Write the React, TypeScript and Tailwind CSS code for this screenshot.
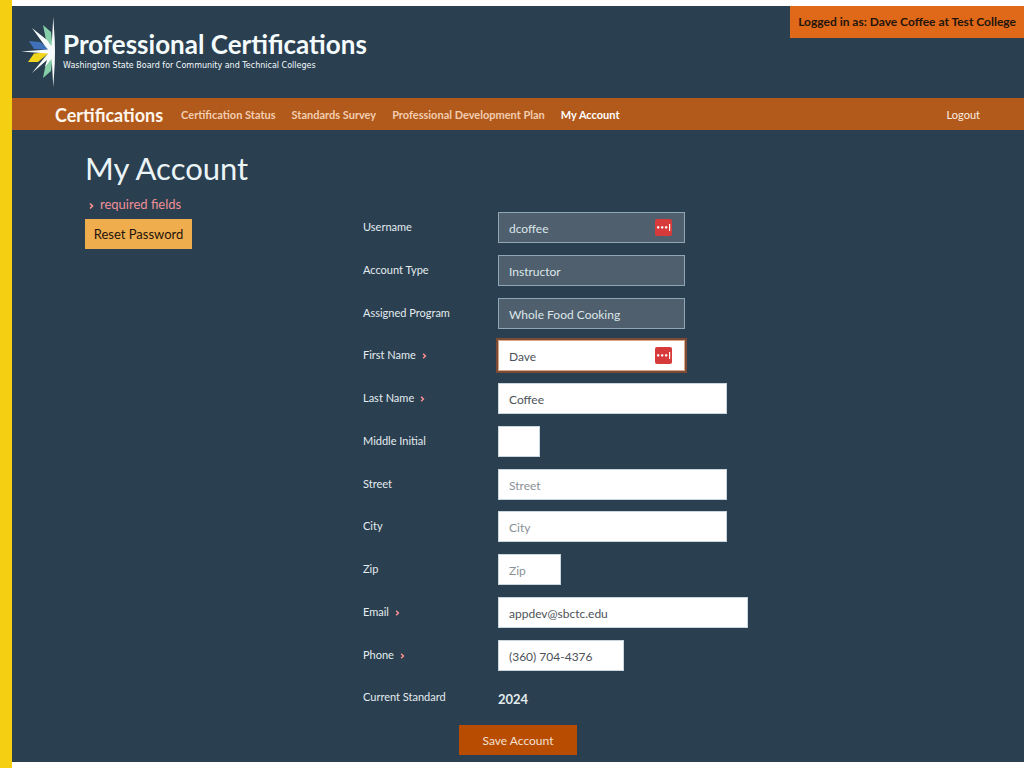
import { useState } from "react";
import type { ChangeEvent } from "react";
import clsx from "clsx";

interface Field {
  id: string;
  label: string;
  value: string;
  width: string;
  placeholder?: string;
  required?: boolean;
  readOnly?: boolean;
  focused?: boolean;
  hasKeyIcon?: boolean;
}

const fields: Field[] = [
  { id: "username", label: "Username", value: "dcoffee", width: "w-[187px]", readOnly: true, hasKeyIcon: true },
  { id: "accountType", label: "Account Type", value: "Instructor", width: "w-[187px]", readOnly: true },
  { id: "program", label: "Assigned Program", value: "Whole Food Cooking", width: "w-[187px]", readOnly: true },
  { id: "firstName", label: "First Name", value: "Dave", width: "w-[187px]", required: true, focused: true, hasKeyIcon: true },
  { id: "lastName", label: "Last Name", value: "Coffee", width: "w-[229px]", required: true },
  { id: "middleInitial", label: "Middle Initial", value: "", width: "w-[42px]" },
  { id: "street", label: "Street", value: "", width: "w-[229px]", placeholder: "Street" },
  { id: "city", label: "City", value: "", width: "w-[229px]", placeholder: "City" },
  { id: "zip", label: "Zip", value: "", width: "w-[63px]", placeholder: "Zip" },
  { id: "email", label: "Email", value: "appdev@sbctc.edu", width: "w-[250px]", required: true },
  { id: "phone", label: "Phone", value: "(360) 704-4376", width: "w-[126px]", required: true },
];

const navLinks = [
  { label: "Certification Status", active: false },
  { label: "Standards Survey", active: false },
  { label: "Professional Development Plan", active: false },
  { label: "My Account", active: true },
];

function StarLogo() {
  return (
    <svg viewBox="0 0 42 70" className="h-[70px] w-[42px] shrink-0" aria-hidden="true">
      {/* coloured rays */}
      <path d="M22 8 L30 15 L31.5 30 L25 23 Z" fill="#86cfa9" />
      <path d="M8 24 L19 25 L30 33 L13 32 Z" fill="#3f70b8" />
      <path d="M13 36.5 L29 35 L17 45 L7 45 Z" fill="#f2d61c" />
      <path d="M25 46 L31.5 39 L30 54 L22 61 Z" fill="#86cfa9" />
      {/* white rays */}
      <path
        d="M32.3 0 L33.8 24 L34 35 L33.8 46 L32.3 70 L31 48 L30.5 42 L24 50 L26 43 L11 56 L24 40 L27 36.5 L0 34.5 L27 32.5 L24 29 L11 11 L26 23 L30.5 29 L31 22 Z"
        fill="#f6fbfb"
      />
    </svg>
  );
}

function RequiredMark({ className }: { className?: string }) {
  return (
    <svg viewBox="0 0 6 8" className={clsx("inline-block", className)} aria-hidden="true">
      <path d="M1.2 1 L4.2 4 L1.2 7" fill="none" stroke="#ff8f8f" strokeWidth="2" />
    </svg>
  );
}

function KeyIcon() {
  return (
    <svg viewBox="0 0 17 17" className="absolute top-[7px] right-[13px] h-[17px] w-[17px]" aria-hidden="true">
      <rect width="17" height="17" rx="2" fill="#d63a3a" />
      <rect x="2" y="7.2" width="2.4" height="2.4" rx="0.8" fill="#fff" />
      <rect x="6" y="7.2" width="2.4" height="2.4" rx="0.8" fill="#fff" />
      <rect x="10" y="7.2" width="2.4" height="2.4" rx="0.8" fill="#fff" />
      <rect x="14" y="5" width="1.2" height="7" fill="#fff" />
    </svg>
  );
}

function FieldRow({ field }: { field: Field }) {
  const [value, setValue] = useState(field.value);

  return (
    <div className="flex items-start">
      <label htmlFor={field.id} className="w-[135px] shrink-0 pt-[7px] text-[11px] leading-4 text-[#e4ecef]">
        {field.label}
        {field.required && <RequiredMark className="ml-[6px] h-[6px] w-[5px]" />}
      </label>
      <div className={clsx("relative", field.width)}>
        <input
          id={field.id}
          type="text"
          value={value}
          placeholder={field.placeholder}
          readOnly={field.readOnly}
          autoFocus={field.focused}
          onChange={(e: ChangeEvent<HTMLInputElement>) => setValue(e.target.value)}
          className={clsx(
            "block h-[31px] w-full border px-[10px] pt-0.5 text-xs outline-none placeholder:text-[#8a9096]",
            field.readOnly && "border-[#8fa6b5] bg-[#4f5f6d] text-[#dce6ea]",
            !field.readOnly && "bg-white text-[#4c5359]",
            !field.readOnly && !field.focused && "border-[#c9d6de]",
            field.focused && "border-[#d9a888] ring-2 ring-[#7d4a35]"
          )}
        />
        {field.hasKeyIcon && <KeyIcon />}
      </div>
    </div>
  );
}

export default function App() {
  return (
    <div className="flex min-h-screen flex-col border-l-12 border-[#f4cf12] bg-white py-[6px] font-['Lato',sans-serif]">
      <div className="flex grow flex-col bg-[#2a3f4f] pb-[7px]">
        <header className="flex h-[92px] items-start justify-between">
          <div className="flex pt-[11px] pl-[9px]">
            <StarLogo />
            <div className="pt-[11px] text-[#f4fbfd]">
              <div className="text-[26px] leading-8 font-bold">Professional Certifications</div>
              <div className="font-['DejaVu_Sans',sans-serif] text-[8px] leading-3">
                Washington State Board for Community and Technical Colleges
              </div>
            </div>
          </div>
          <div className="bg-[#df6919] px-2 text-xs leading-8 font-bold text-[#23140c]">
            Logged in as: Dave Coffee at Test College
          </div>
        </header>

        <nav className="flex h-8 items-center bg-[#b15a1b] pt-0.5 pr-[44px] pl-[43px] text-[11px]">
          <a href="#" className="mr-[18px] text-lg font-bold text-[#fff6ee]">
            Certifications
          </a>
          <div className="flex gap-4">
            {navLinks.map((link) => (
              <a
                key={link.label}
                href="#"
                className={clsx("font-bold", link.active ? "text-white" : "text-[#f3cdb0]")}
              >
                {link.label}
              </a>
            ))}
          </div>
          <a href="#" className="ml-auto text-[#fbeee2]">
            Logout
          </a>
        </nav>

        <main className="flex grow px-[73px] pt-5">
          <div className="w-[278px] shrink-0">
            <h1 className="text-[31px] leading-9 text-[#eaf4f6]">My Account</h1>
            <p className="mt-[10px] flex items-center gap-[6px] pl-1 text-[13px] leading-4 text-[#f08f97]">
              <RequiredMark className="mt-1 h-2 w-[5px]" />
              required fields
            </p>
            <button type="button" className="mt-[7px] h-[30px] w-[107px] bg-[#f0ad4e] pt-0.5 text-[13px] text-[#23140c]">
              Reset Password
            </button>
          </div>

          <form className="flex flex-col justify-between gap-2 pt-[62px]">
            {fields.map((field) => (
              <FieldRow key={field.id} field={field} />
            ))}
            <div className="flex h-[31px] text-[#e4ecef]">
              <span className="w-[135px] pt-[7px] text-[11px] leading-4">Current Standard</span>
              <span className="pt-[7px] text-[13px] leading-5 font-bold">2024</span>
            </div>
            <button type="button" className="ml-24 h-[30px] w-[118px] bg-[#b84c00] pt-0.5 text-xs text-[#f3e0d2]">
              Save Account
            </button>
          </form>
        </main>
      </div>
    </div>
  );
}
